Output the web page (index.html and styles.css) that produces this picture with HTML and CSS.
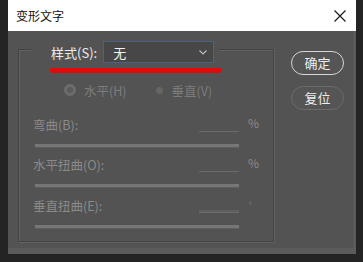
FILE: index.html
```html
<!DOCTYPE html>
<html lang="zh">
<head>
<meta charset="utf-8">
<link rel="stylesheet" href="styles.css">
</head>
<body>
<div class="window">
  <div class="titlebar">
    <span class="title">变形文字</span>
    <svg class="close" width="12" height="12" viewBox="0 0 12 12"><path d="M0.5 0.5 L11.5 11.5 M11.5 0.5 L0.5 11.5" stroke="#1a1a1a" stroke-width="1.2" fill="none"/></svg>
  </div>
  <div class="body">
    <div class="group">
      <div class="group-head">
        <span class="style-label">样式(S):</span>
        <div class="select"><span>无</span>
          <svg class="chev" width="8" height="5" viewBox="0 0 8 5"><path d="M0.5 0.5 L4 4 L7.5 0.5" stroke="#bbb" stroke-width="1.2" fill="none"/></svg>
        </div>
      </div>
      <div class="radios">
        <span class="radio on"></span><span class="rlabel">水平(H)</span>
        <span class="radio off"></span><span class="rlabel">垂直(V)</span>
      </div>
      <div class="param p1">
        <div class="param-top"><span class="lbl">弯曲(B):</span><span class="field"></span><span class="pct">%</span></div>
        <div class="track"></div>
      </div>
      <div class="param p2">
        <div class="param-top"><span class="lbl">水平扭曲(O):</span><span class="field"></span><span class="pct">%</span></div>
        <div class="track"></div>
      </div>
      <div class="param p3">
        <div class="param-top"><span class="lbl">垂直扭曲(E):</span><span class="field double"></span><span class="pct small">‹</span></div>
        <div class="track"></div>
      </div>
    </div>
    <div class="buttons">
      <button class="btn primary">确定</button>
      <button class="btn">复位</button>
    </div>
    <div class="mark"></div>
  </div>
</div>
</body>
</html>
```
FILE: styles.css
```css
* { box-sizing: border-box; }
html, body { margin: 0; padding: 0; }
body {
  width: 363px;
  height: 262px;
  overflow: hidden;
  background: #242424;
  font-family: "Noto Sans CJK SC", "Noto Sans", sans-serif;
}
.window {
  margin-left: 8px;
  width: 348px;
}
.titlebar {
  height: 31px;
  background: #ffffff;
  display: flex;
  align-items: center;
  justify-content: space-between;
  padding: 0 10px 0 8px;
}
.title {
  font-size: 12px;
  color: #111;
}
.close { display: block; }
.body {
  position: relative;
  height: 223px;
  background: #535353;
  display: flex;
  align-items: flex-start;
  padding-left: 10px;
  box-shadow: inset -3px -6px 0 #5b5b5b;
}
.group {
  margin-top: 18px;
  width: 256px;
  height: 193px;
  border: 1px solid #434343;
  box-shadow: inset 1px 1px 0 #626262, 1px 1px 0 #626262;
  padding-left: 14px;
}
.group-head {
  display: flex;
  align-items: center;
  width: fit-content;
  margin: -9px 0 0 -2px;
  padding: 0 5px 0 20px;
  background: #535353;
}
.style-label {
  font-size: 13px;
  color: #ececec;
  margin-right: 6px;
}
.select {
  width: 111px;
  height: 22px;
  background: #474747;
  border: 1px solid #4d6186;
  display: flex;
  align-items: center;
  justify-content: space-between;
  padding: 0 6px 0 9px;
  font-size: 13px;
  color: #f2f2f2;
}
.chev { display: block; }
.radios {
  display: flex;
  align-items: center;
  height: 16px;
  margin: 19px 0 0 31px;
  font-size: 12.5px;
  color: #7c7c7c;
}
.radio {
  display: inline-block;
  border-radius: 50%;
}
.radio.on {
  width: 12px;
  height: 12px;
  border: 3px solid #6c6c6c;
  background: #5a5a5a;
  margin-right: 8px;
}
.radio.off {
  width: 7px;
  height: 7px;
  background: #656565;
  margin: 0 9px 0 29px;
}
.param-top {
  display: flex;
  align-items: center;
  height: 16px;
}
.p1 { margin-top: 18px; }
.p2 { margin-top: 9px; }
.p3 { margin-top: 10px; }
.lbl {
  font-size: 12.5px;
  color: #8a8a8a;
  width: 166px;
}
.field {
  width: 40px;
  height: 16px;
  border-bottom: 1px solid #6a6a6a;
}
.field.double {
  box-shadow: 0 -2px 0 #606060 inset;
}
.pct {
  font-size: 12px;
  color: #8c8c8c;
  margin: -4px 0 0 9px;
}
.pct.small {
  font-size: 10px;
  color: #777;
  margin: -8px 0 0 10px;
}
.track {
  margin: 12px 0 0 2px;
  width: 204px;
  height: 3px;
  background: #767676;
  box-shadow: 0 1px 0 #5e5e5e;
}
.buttons {
  display: flex;
  flex-direction: column;
  gap: 11px;
  margin: 20px 0 0 17px;
}
.btn {
  width: 53px;
  height: 24px;
  border-radius: 12px;
  border: 1.5px solid #6b6b6b;
  background: #555555;
  color: #ededed;
  font-family: "Noto Sans CJK SC", sans-serif;
  font-size: 13px;
  padding: 0;
  line-height: 20px;
}
.btn.primary {
  border-color: #d6d6d6;
}
.mark {
  position: absolute;
  left: 42px;
  top: 37px;
  width: 172px;
  height: 5px;
  background: #e40a0a;
  border-radius: 2px 3px 3px 2px;
}
```
